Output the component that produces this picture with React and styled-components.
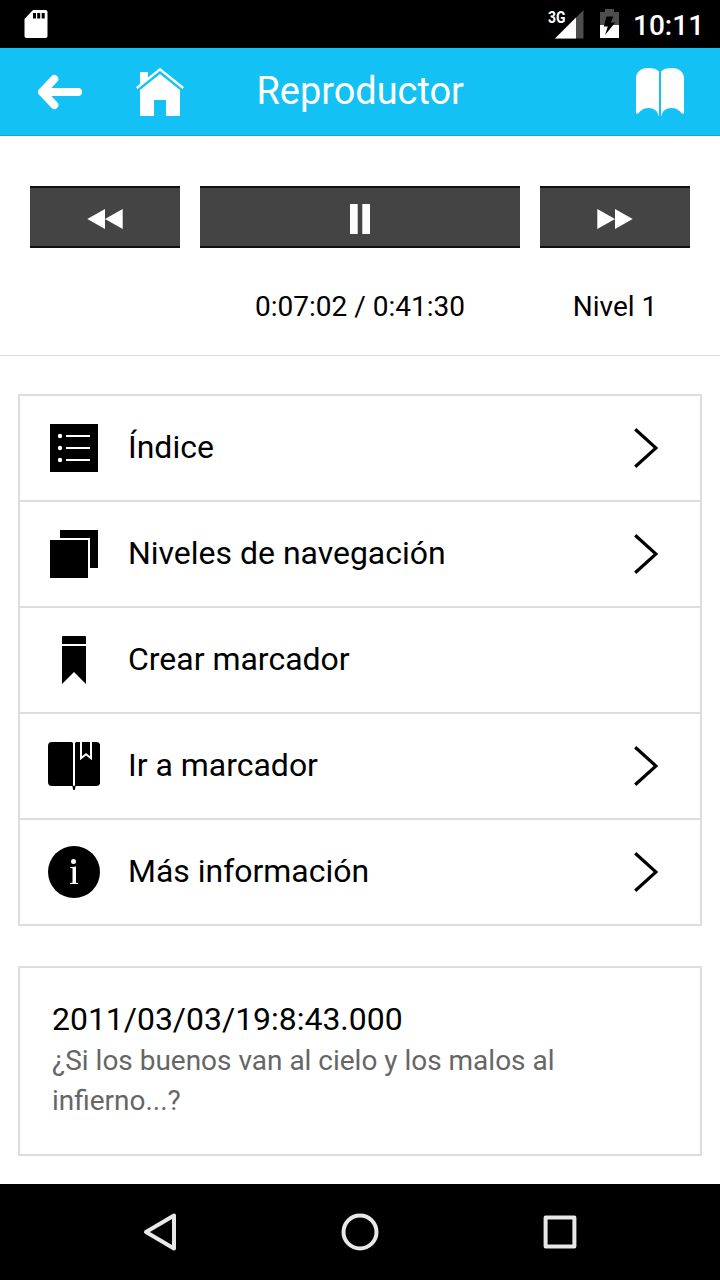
import React from "react";
import styled, { createGlobalStyle } from "styled-components";

const GlobalStyle = createGlobalStyle`
  * { box-sizing: border-box; }
  body { margin: 0; background: #fff; font-family: Roboto, "Liberation Sans", sans-serif; color: #000; }
  svg { display: block; flex: none; }
`;

const Screen = styled.div`
  width: 720px;
  height: 1280px;
  display: flex;
  flex-direction: column;
  overflow: hidden;
  background: #fff;
`;

const StatusBar = styled.div`
  height: 48px;
  flex: none;
  background: #000;
  color: #fff;
  display: flex;
  align-items: center;
  justify-content: space-between;
  padding: 0 17px 0 24px;
`;

const StatusGroup = styled.div`
  display: flex;
  align-items: center;
`;

const StatusIcons = styled.div`
  display: flex;
  align-items: center;
  gap: 16px;
`;

const Clock = styled.span`
  font-size: 28px;
  font-weight: 500;
  line-height: 44px;
  width: 70px;
  margin-left: 14px;
  padding-top: 3px;
  white-space: nowrap;
`;

const Header = styled.header`
  height: 88px;
  flex: none;
  background: #13c1f5;
  border-bottom: 1px solid #10a5d2;
  color: #fff;
  display: grid;
  grid-template-columns: 44px 48px 1fr 48px;
  align-items: center;
  padding: 0 36px 0 38px;
  column-gap: 54px;
`;

const IconButton = styled.button`
  border: 0;
  padding: 0;
  background: none;
  color: inherit;
  display: block;
`;

const Title = styled.h1`
  margin: 0 0 0 18.5px;
  padding-bottom: 2px;
  font-size: 37.9px;
  font-weight: 400;
  line-height: 84px;
`;

const Player = styled.section`
  height: 220px;
  flex: none;
  padding: 50px 30px 0;
  border-bottom: 1px solid #ddd;
`;

const PlayerGrid = styled.div`
  display: grid;
  grid-template-columns: 150px 320px 150px;
  column-gap: 20px;
  text-align: center;
`;

const PlayerButton = styled.button`
  height: 62px;
  padding: 4px 0 0;
  border: solid #111;
  border-width: 2px 0;
  background: #444;
  color: #fff;
  display: flex;
  align-items: center;
  justify-content: center;
`;

const Readout = styled.span`
  grid-column: ${(p) => p.$column};
  margin-top: 42px;
  font-size: 28px;
  line-height: 34px;
`;

const Menu = styled.nav`
  flex: none;
  margin: 38px 18px 0;
  border: 2px solid #ddd;
`;

const MenuRow = styled.a`
  height: 104px;
  padding: 0 42px 0 28px;
  display: flex;
  align-items: center;
  & + & { height: 106px; border-top: 2px solid #ddd; }
`;

const MenuLabel = styled.span`
  flex: 1;
  margin-left: 28px;
  padding-bottom: 2px;
  font-size: 31.97px;
  line-height: 40px;
`;

const Card = styled.article`
  flex: none;
  height: 190px;
  margin: 40px 18px 0;
  padding: 31px 32px;
  border: 2px solid #ddd;
`;

const CardTitle = styled.h2`
  margin: 0 0 2px;
  font-size: 31.95px;
  font-weight: 400;
  line-height: 40px;
`;

const CardText = styled.p`
  margin: 0;
  font-size: 27.97px;
  line-height: 40px;
  color: #666;
  width: 540px;
`;

const NavBar = styled.div`
  height: 96px;
  flex: none;
  margin-top: auto;
  background: #000;
  display: grid;
  grid-template-columns: repeat(3, 200px);
  justify-content: center;
  align-items: center;
  justify-items: center;
`;

const SdCard = () => (
  <svg width="24" height="28" viewBox="0 0 24 28">
    <path d="M9 0H21.5Q23.5 0 23.5 2V26Q23.5 28 21.5 28H2.5Q.5 28 .5 26V9Z" fill="#fff" />
    <path d="M9 3h3v5.5H9zM13.2 3h3v5.5h-3zM17.7 3h3v5.5h-3z" fill="#000" />
  </svg>
);

const Signal = () => (
  <svg width="37" height="32" viewBox="547 8 37 32">
    <path d="M583.5 10V38.5H555Z" fill="#4d4d4d" />
    <path d="M576 17.5V38.5H555Z" fill="#fff" />
    <text x="548" y="22.7" fill="#fff" fontFamily="Roboto" fontSize="16" fontWeight="700" textLength="17.5" lengthAdjust="spacingAndGlyphs">3G</text>
  </svg>
);

const Battery = () => (
  <svg width="19" height="30" viewBox="600 9 19 30">
    <path d="M605 9h9v3h5v13h-19v-13h5z" fill="#4d4d4d" />
    <path d="M600 25h19v13h-19z" fill="#fff" />
    <path d="M606.5 16.5H613.3L610.8 22.5H615.3L605 35L607.8 26.5H603.8Z" fill="#000" />
  </svg>
);

const BackArrow = () => (
  <svg width="44" height="48" viewBox="38 68 44 48" fill="none" stroke="#fff" strokeWidth="8" strokeLinecap="round" strokeLinejoin="round">
    <path d="M54.3 79L42 92L54.3 105M43 92H78" />
  </svg>
);

const Home = () => (
  <svg width="48" height="48" viewBox="136 68 48 48">
    <path d="M136.8 88L160 69.4L183.2 88" fill="none" stroke="#fff" strokeWidth="2.4" />
    <path d="M140 72h8v6.2L140 84.5zM160 74L180 90V116H166V100H154V116H140V90Z" fill="#fff" />
  </svg>
);

const Book = () => (
  <svg width="48" height="48" viewBox="0 0 48 48" fill="#fff">
    <path d="M0 9C1 3 6 0 12 0C17 0 21 1 23 3.5V48H22.5C22 43 18 40 12.500 40C8 40 4.500 42 2.300 45.500H0Z" />
    <path d="M48 9C47 3 42 0 36 0C31 0 27 1 25 3.5V48H25.5C26 43 30 40 35.500 40C40 40 43.500 42 45.700 45.500H48Z" />
  </svg>
);

const Rewind = () => (
  <svg width="36" height="20" viewBox="0 0 36 20" fill="#fff">
    <path d="M.3 10L18 0V20ZM18 10L35.7 0V20Z" />
  </svg>
);

const Forward = () => (
  <svg width="36" height="20" viewBox="0 0 36 20" fill="#fff">
    <path d="M.3 0L18 10L.3 20ZM18 0L35.7 10L18 20Z" />
  </svg>
);

const Pause = () => (
  <svg width="20" height="30" viewBox="0 0 20 30" fill="#fff">
    <rect width="7.7" height="30" rx=".5" />
    <rect x="12.3" width="7.7" height="30" rx=".5" />
  </svg>
);

const MenuIcon = ({ children }) => (
  <svg width="52" height="52" viewBox="0 0 52 52">{children}</svg>
);

const IndexIcon = () => (
  <MenuIcon>
    <path d="M2 2h48v48H2z" />
    <path d="M18 13h24v2H18zM18 25h24v2H18zM18 37h24v2H18z" fill="#fff" />
    <circle cx="12" cy="14" r="2.2" fill="#fff" />
    <circle cx="12" cy="26" r="2.2" fill="#fff" />
    <circle cx="12" cy="38" r="2.2" fill="#fff" />
  </MenuIcon>
);

const LevelsIcon = () => (
  <MenuIcon>
    <path d="M12 2H50V40H42V10H12ZM2 12H40V50H2Z" />
  </MenuIcon>
);

const BookmarkIcon = () => (
  <MenuIcon>
    <path d="M15 2H37Q38 2 38 3V10H14V3Q14 2 15 2ZM14 12H38V50L26 38L14 50Z" />
  </MenuIcon>
);

const GoToBookmarkIcon = () => (
  <MenuIcon>
    <path d="M4 2H23.5Q25 2 25 3.5V46H4Q0 46 0 42V6Q0 2 4 2ZM28.5 2H48Q52.3 2 52.3 6V42Q52.3 46 48 46H27V3.5Q27 2 28.5 2Z" />
    <path d="M24.3 45.7H27.7L26.8 50H25.2Z" />
    <path d="M33 2V18.2L38 14.2L43 18.2V2" fill="none" stroke="#fff" strokeWidth="2" />
  </MenuIcon>
);

const InfoIcon = () => (
  <MenuIcon>
    <circle cx="26" cy="26" r="26" />
    <circle cx="25.5" cy="15.5" r="2.5" fill="#fff" />
    <path d="M22 21.2L28 20.5V36.7L30 37V38H22V37L24.5 36.7V22.3L22 22Z" fill="#fff" />
  </MenuIcon>
);

const Chevron = () => (
  <svg width="24" height="40" viewBox="0 0 24 40" fill="none" stroke="#000" strokeWidth="3.2">
    <path d="M1.2 1.2L22 20L1.2 38.8" />
  </svg>
);

const NavBack = () => (
  <svg width="40" height="40" viewBox="0 0 40 40" fill="none" stroke="#e8e8e8" strokeWidth="4" strokeLinejoin="round">
    <path d="M34 3.5V36.5L6 20Z" />
  </svg>
);

const NavHome = () => (
  <svg width="40" height="40" viewBox="0 0 40 40" fill="none" stroke="#e8e8e8" strokeWidth="4">
    <circle cx="20" cy="20" r="16.5" />
  </svg>
);

const NavRecent = () => (
  <svg width="40" height="40" viewBox="0 0 40 40" fill="none" stroke="#e8e8e8" strokeWidth="4" strokeLinejoin="round">
    <rect x="5.6" y="5.6" width="28.8" height="28.8" />
  </svg>
);

const MENU = [
  { label: "Índice", Icon: IndexIcon, opens: true },
  { label: "Niveles de navegación", Icon: LevelsIcon, opens: true },
  { label: "Crear marcador", Icon: BookmarkIcon, opens: false },
  { label: "Ir a marcador", Icon: GoToBookmarkIcon, opens: true },
  { label: "Más información", Icon: InfoIcon, opens: true },
];

export default function App() {
  return (
    <Screen>
      <GlobalStyle />
      <StatusBar>
        <SdCard />
        <StatusGroup>
          <StatusIcons>
            <Signal />
            <Battery />
          </StatusIcons>
          <Clock>10:11</Clock>
        </StatusGroup>
      </StatusBar>
      <Header>
        <IconButton aria-label="Volver"><BackArrow /></IconButton>
        <IconButton aria-label="Inicio"><Home /></IconButton>
        <Title>Reproductor</Title>
        <IconButton aria-label="Libros"><Book /></IconButton>
      </Header>
      <Player>
        <PlayerGrid>
          <PlayerButton aria-label="Retroceder"><Rewind /></PlayerButton>
          <PlayerButton aria-label="Pausa"><Pause /></PlayerButton>
          <PlayerButton aria-label="Avanzar"><Forward /></PlayerButton>
          <Readout $column={2}>0:07:02 / 0:41:30</Readout>
          <Readout $column={3}>Nivel 1</Readout>
        </PlayerGrid>
      </Player>
      <Menu>
        {MENU.map(({ label, Icon, opens }) => (
          <MenuRow key={label}>
            <Icon />
            <MenuLabel>{label}</MenuLabel>
            {opens && <Chevron />}
          </MenuRow>
        ))}
      </Menu>
      <Card>
        <CardTitle>2011/03/03/19:8:43.000</CardTitle>
        <CardText>¿Si los buenos van al cielo y los malos al infierno...?</CardText>
      </Card>
      <NavBar>
        <NavBack />
        <NavHome />
        <NavRecent />
      </NavBar>
    </Screen>
  );
}
